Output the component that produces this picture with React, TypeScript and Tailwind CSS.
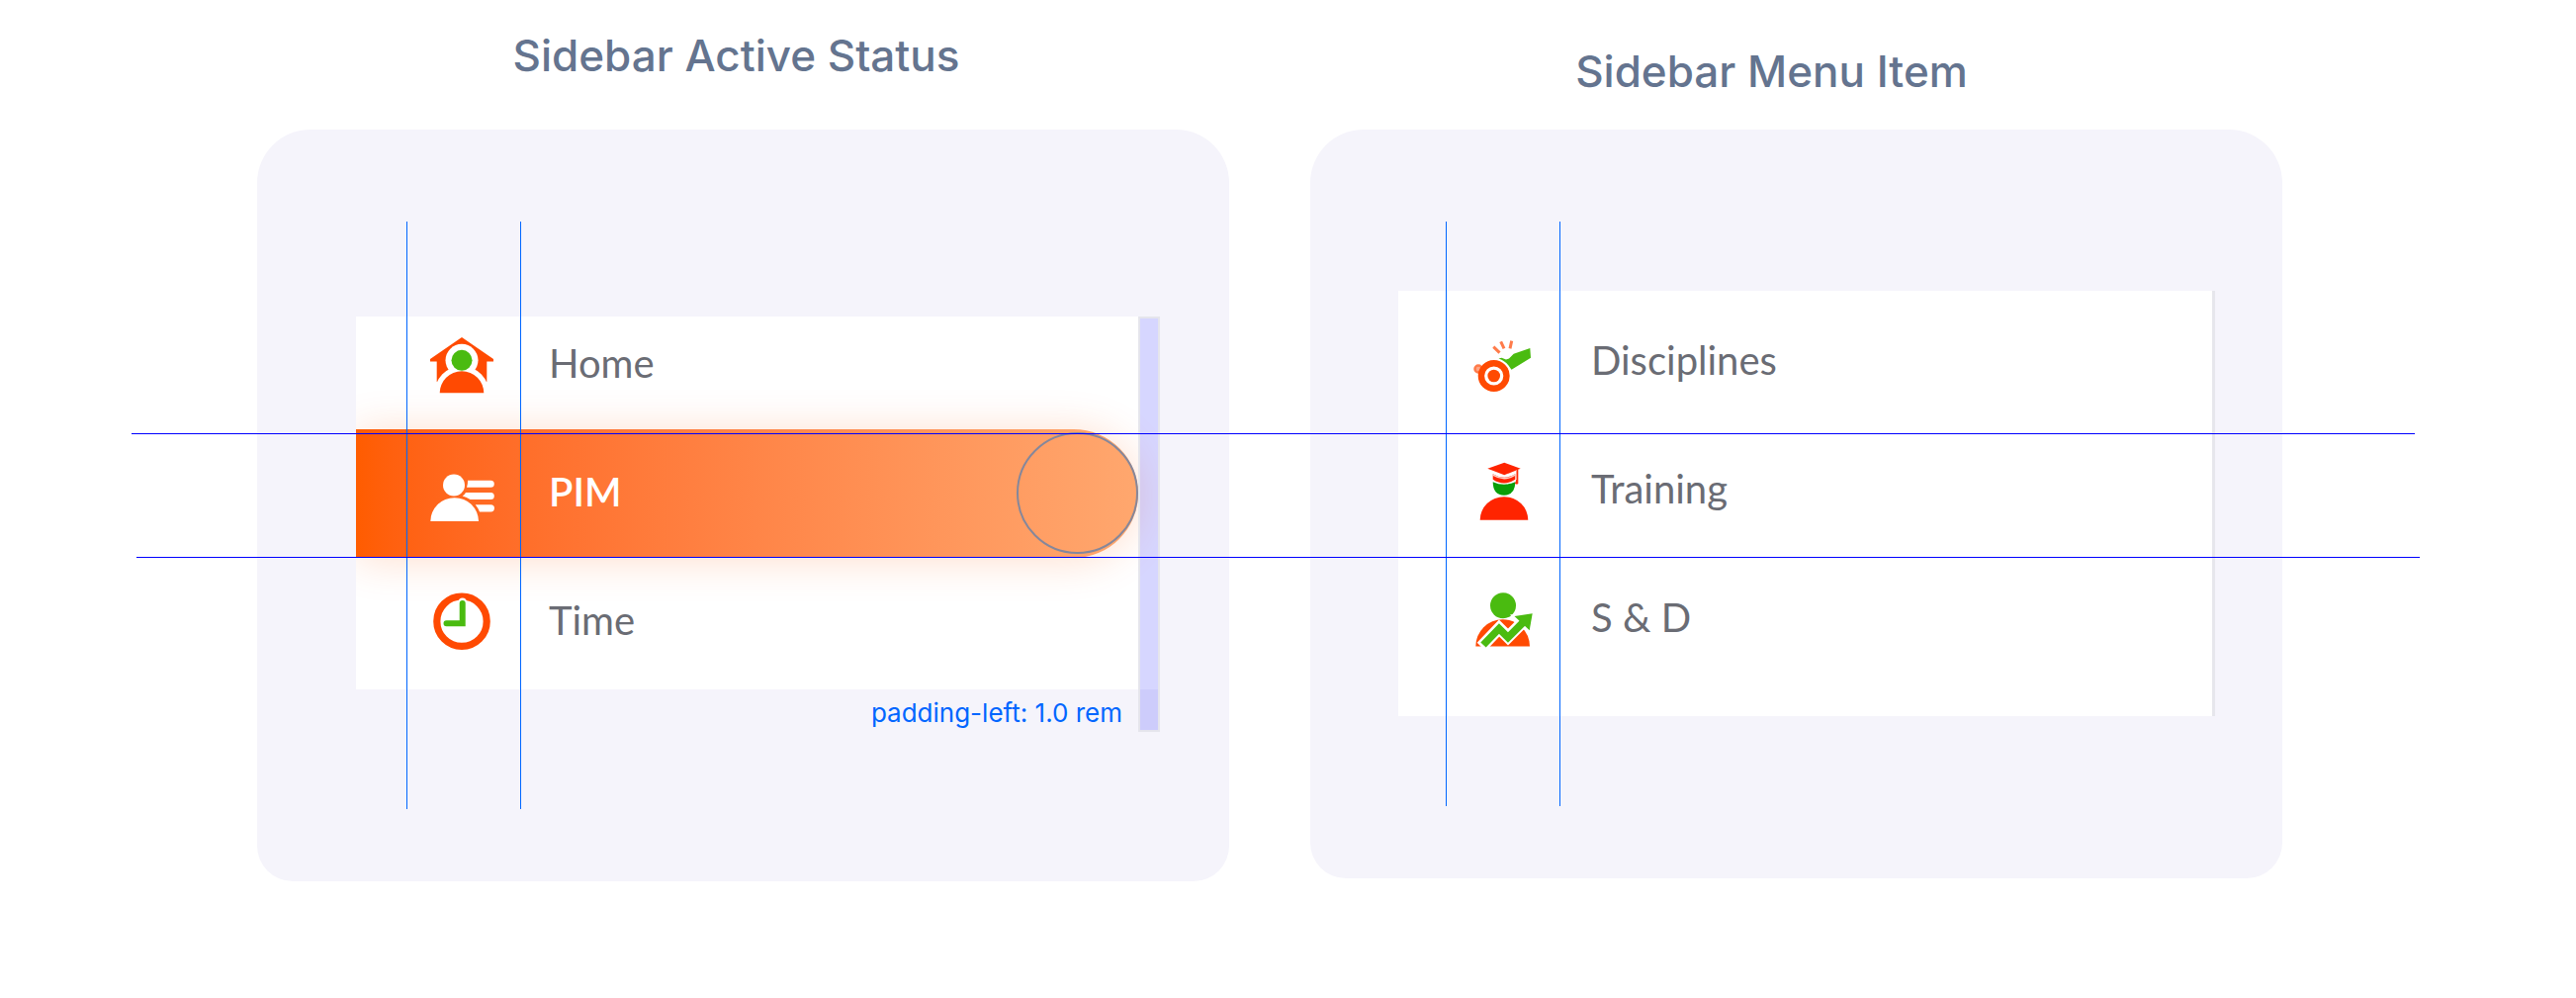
import type { ReactNode } from "react";

const ORANGE = "#ff4a02";
const GREEN = "#4abb10";

function Icon({ children }: { children: ReactNode }) {
  return (
    <svg viewBox="0 0 64 64" className="size-16 shrink-0 overflow-visible" aria-hidden="true">
      {children}
    </svg>
  );
}

function HomeIcon() {
  return (
    <Icon>
      <path d="M32 4 64 26v2.5h-6.7V49H6.7V28.500H0V26Z" fill={ORANGE} />
      <circle cx="32" cy="27.300" r="16.500" fill="#fff" />
      <path d="M4 62a28 29 0 0 1 56 0Z" fill="#fff" />
      <path d="M9.700 60.300a22.300 22 0 0 1 44.600 0Z" fill={ORANGE} />
      <circle cx="32" cy="27.300" r="10.500" fill={GREEN} />
    </Icon>
  );
}

function PimIcon() {
  return (
    <Icon>
      <g fill="#fff">
        <circle cx="24" cy="23.500" r="11" />
        <path d="M.3 60a24.300 23.700 0 0 1 48.700 0Z" />
        <path d="M38 18.700h23.300a3.500 3.500 0 0 1 0 7H37q1.200-3.500 1-7Z" />
        <path d="M36 31h25.300a3.500 3.500 0 0 1 0 7H40.500Q37 35.500 32.700 34.500 34.700 33 36 31Z" />
        <path d="M45.700 43.200h15.600a3.600 3.600 0 0 1 0 7.300H50q-1.500-4-4.300-7.300Z" />
      </g>
    </Icon>
  );
}

function TimeIcon() {
  return (
    <Icon>
      <circle cx="32" cy="31.200" r="25.200" fill="none" stroke={ORANGE} strokeWidth="7.200" />
      <path d="M32.700 12v21.200H16" fill="none" stroke="#fff" strokeWidth="9" strokeLinecap="round" />
      <path d="M32.700 13v20.200H16.500" fill="none" stroke={GREEN} strokeWidth="6" strokeLinecap="round" />
    </Icon>
  );
}

function DisciplinesIcon() {
  return (
    <Icon>
      <circle cx="6" cy="39" r="3.500" fill="#ffa585" stroke="#ff7b4a" strokeWidth="2.500" />
      <circle cx="21.700" cy="46" r="12.800" fill="#fff" stroke={ORANGE} strokeWidth="6.400" />
      <circle cx="21.700" cy="46" r="6.300" fill={ORANGE} />
      <path
        d="m21.300 16.700 6.200 6M28.700 11.300l3.300 7M39.700 10.700 38 18.300"
        fill="none"
        stroke="#ff7b4a"
        strokeWidth="3"
      />
      <path d="m26.500 28.500 3-.8 4.500 1.800 3-1 4.700-4.800 16.600-5.700.7 9.700-19.500 12-3-4.200q-3.500-4.700-10-7Z" fill={GREEN} />
    </Icon>
  );
}

function TrainingIcon() {
  return (
    <Icon>
      <path d="m15.300 9.800 17-6 16.400 6-16.400 6.400Z" fill="#ff2400" />
      <path d="M20.700 15.200q11.500 7 22.600 0v5.500q-11.300 7.500-22.600 0Z" fill="#ff2400" />
      <path d="M45 11.500v9l-1.500 4.500h2.300V11Z" fill="#ff2400" stroke="#ff2400" />
      <path d="M20.700 16.200q11.500 7 22.600 0" fill="none" stroke="#ffd5cc" strokeWidth="1.500" />
      <path d="M20.700 23.300q11.300 5 22.600 0 0 13.200-11.300 13.500-11.300-.3-11.300-13.500Z" fill="#0a9e08" />
      <path d="M7.700 61.800a24.300 23.600 0 0 1 48.600 0Z" fill="#ff2400" />
    </Icon>
  );
}

function SalesIcon() {
  return (
    <Icon>
      <circle cx="31" cy="18.200" r="13" fill={GREEN} />
      <path d="M3.300 59.500a27.300 27.300 0 0 1 54.700 0Z" fill={ORANGE} />
      <path d="M9 60 27 41l9 9 17-17" fill="none" stroke="#fff" strokeWidth="12" />
      <path d="m38 27.500 24.500-4-3.500 24Z" fill="#fff" />
      <path d="M11 58 27 41.500l9 9L53 33.500" fill="none" stroke={GREEN} strokeWidth="7.500" />
      <path d="m42.500 29 18.200-2.800-3 17Z" fill={GREEN} />
    </Icon>
  );
}

function MenuLink({ icon, label, active = false }: { icon: ReactNode; label: string; active?: boolean }) {
  return (
    <a
      href="#"
      aria-current={active ? "page" : undefined}
      className={
        active
          ? "flex h-[130px] items-center gap-14 rounded-r-full bg-linear-to-r from-[#ff5c00] to-[#ffa76e] pl-[75px] text-[40px] leading-12 font-semibold text-white shadow-[0_2px_44px_rgba(255,92,0,0.2)]"
          : "flex h-[130px] items-center gap-14 pl-[75px] text-[40px] leading-12 text-[#6a6c74]"
      }
    >
      {icon}
      <span className="pb-1">{label}</span>
    </a>
  );
}

function VerticalGuides({ className }: { className: string }) {
  return <div aria-hidden="true" className={`pointer-events-none absolute w-[116px] border-x border-[#0066ff] ${className}`} />;
}

export default function App() {
  return (
    <main className="relative flex min-h-screen gap-[82px] bg-white pr-[297px] pl-[260px] font-[Lato,'Noto_Sans',sans-serif]">
      <section className="min-w-0 flex-1">
        <h2 className="h-[131px] pt-8 pr-3.5 text-center font-[Inter,sans-serif] text-[44px] leading-12 font-medium text-[#64748f]">
          Sidebar Active Status
        </h2>
        <div className="relative h-[760px] rounded-t-[54px] rounded-b-[36px] bg-[#f5f4fb] pt-[189px] pr-[70px] pl-[100px]">
          <div className="relative">
            <nav aria-label="Active status example" className="overflow-hidden bg-white pr-[22px] pb-[3px]">
              <div className="-mt-4">
                <MenuLink icon={<HomeIcon />} label="Home" />
              </div>
              <div className="relative">
                <MenuLink icon={<PimIcon />} label="PIM" active />
                <div
                  aria-hidden="true"
                  className="absolute top-[3px] right-0 size-[123px] rounded-full border-2 border-[#85879b]"
                />
              </div>
              <MenuLink icon={<TimeIcon />} label="Time" />
            </nav>
            <p className="pt-2 pr-[38px] text-right font-[Inter,sans-serif] text-[26px] leading-8 text-[#0066ff]">
              padding-left: 1.0 rem
            </p>
            <div
              aria-hidden="true"
              className="absolute top-0 right-0 h-[420px] w-[22px] border-2 border-[#e5e5ec] bg-[#0000ff]/16"
            />
          </div>
          <VerticalGuides className="top-[93px] left-[151px] h-[594px]" />
        </div>
      </section>

      <section className="min-w-0 flex-1">
        <h2 className="h-[131px] pt-12 pr-[50px] text-center font-[Inter,sans-serif] text-[44px] leading-12 font-medium text-[#64748f]">
          Sidebar Menu Item
        </h2>
        <div className="relative h-[757px] rounded-t-[54px] rounded-b-[36px] bg-[#f5f4fb] pt-[163px] pr-[68px] pl-[89px]">
          <nav aria-label="Menu item example" className="border-r-3 border-[#e6e6ec] bg-white pt-[7px] pb-[33px]">
            <MenuLink icon={<DisciplinesIcon />} label="Disciplines" />
            <MenuLink icon={<TrainingIcon />} label="Training" />
            <MenuLink icon={<SalesIcon />} label="S & D" />
          </nav>
          <VerticalGuides className="top-[93px] left-[137px] h-[591px]" />
        </div>
      </section>

      <div aria-hidden="true" className="pointer-events-none absolute top-[438px] right-[163px] left-[133px] h-px bg-[#0000ff]" />
      <div aria-hidden="true" className="pointer-events-none absolute top-[563px] right-[158px] left-[138px] h-px bg-[#0000ff]" />
    </main>
  );
}
